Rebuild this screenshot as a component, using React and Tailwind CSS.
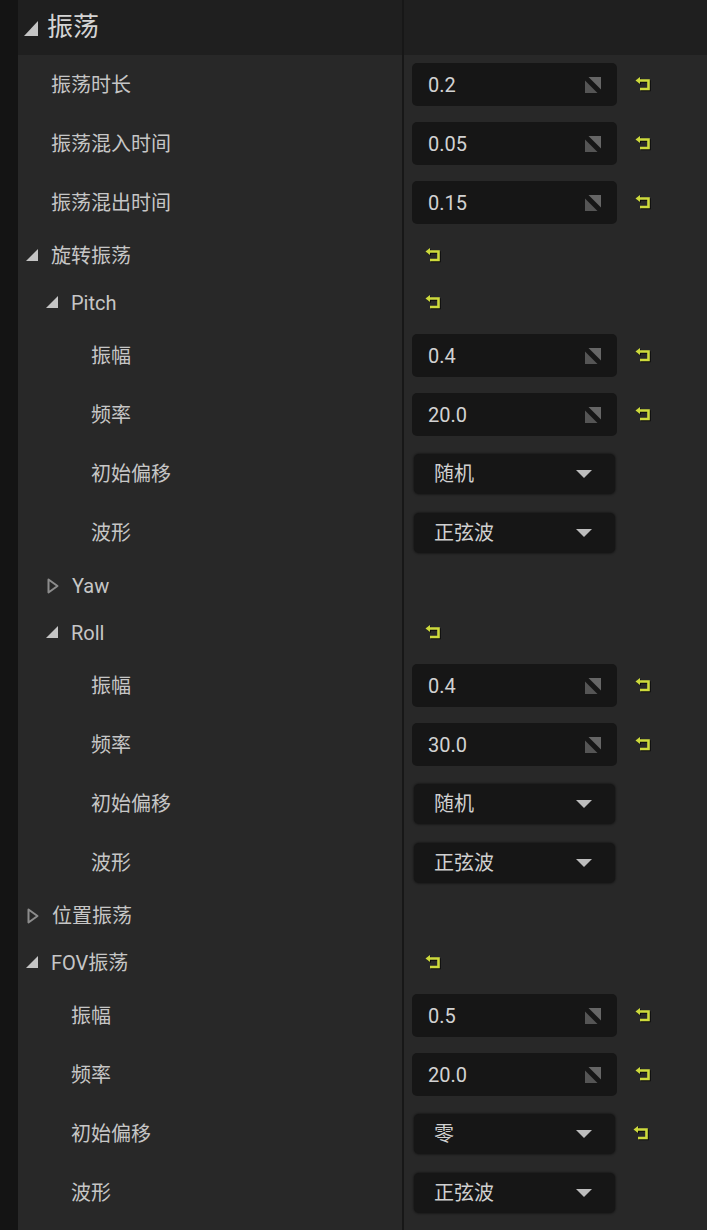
import React from "react";

const FONT = { fontFamily: "Roboto, 'Noto Sans CJK SC', 'Noto Sans', sans-serif" };

function ExpandedArrow({ className = "" }) {
  return (
    <svg width="12" height="12" viewBox="0 0 12 12" className={className}>
      <polygon points="12,0 12,12 0,12" fill="#c4c4c4" />
    </svg>
  );
}

function CollapsedArrow() {
  return (
    <svg width="12" height="16" viewBox="0 0 12 16">
      <polygon points="1.5,1.5 10.5,8 1.5,14.5" fill="none" stroke="#8c8c8c" strokeWidth="2" strokeLinejoin="round" />
    </svg>
  );
}

function ResetIcon() {
  return (
    <svg width="17" height="17" viewBox="0 0 17 17" className="drop-shadow-[1px_1px_0_rgba(0,0,0,0.7)]">
      <polygon points="0.5,4.5 5,1 5,8" fill="#cdda3c" />
      <polyline points="4,4.5 13.5,4.5 13.5,13 5,13" fill="none" stroke="#cdda3c" strokeWidth="2.6" strokeLinejoin="miter" />
    </svg>
  );
}

function SpinIcon() {
  return (
    <svg width="16" height="16" viewBox="0 0 16 16">
      <polygon points="3.5,0 16,0 16,12.5" fill="#666666" />
      <polygon points="0,3.5 0,16 12.5,16" fill="#555555" />
    </svg>
  );
}

function NumberField({ value }) {
  return (
    <div className="flex h-[43px] w-[205px] items-center justify-between rounded-[5px] bg-[#161616] pl-4 pr-[16px]">
      <span className="text-[20px] text-[#d2d2d2]">{value}</span>
      <SpinIcon />
    </div>
  );
}

function ComboField({ value }) {
  return (
    <div className="ml-[2px] flex h-[40px] w-[201px] items-center justify-between rounded-[5px] bg-[#161616] pl-5 pr-[23px] shadow-[0_0_2px_1px_rgba(0,0,0,0.35)]">
      <span className="text-[20px] text-[#d0d0d0]">{value}</span>
      <svg width="16" height="8" viewBox="0 0 16 8">
        <polygon points="0,0 16,0 8,8" fill="#bdbdbd" />
      </svg>
    </div>
  );
}

// one property row: name on the left, value editor on the right
function PropRow({ label, indent, kind, value, reset }) {
  return (
    <div className="flex h-[59px]">
      <div className="flex w-[386px] items-center border-r-2 border-[#171717]" style={{ paddingLeft: indent }}>
        <span className="text-[20px] text-[#c6c6c6]">{label}</span>
      </div>
      <div className="flex flex-1 items-center pl-2">
        {kind === "num" ? <NumberField value={value} /> : <ComboField value={value} />}
        {reset && (
          <div className="ml-[18px] flex items-center">
            <ResetIcon />
          </div>
        )}
      </div>
    </div>
  );
}

// a group heading with its fold arrow
function GroupRow({ label, arrowPad, open, reset }) {
  return (
    <div className="flex h-[47px]">
      <div className="flex w-[386px] items-center border-r-2 border-[#171717]" style={{ paddingLeft: arrowPad }}>
        <div className="flex w-[25px] items-center">
          {open ? <ExpandedArrow className="-mt-[2px]" /> : <CollapsedArrow />}
        </div>
        <span className="text-[20px] text-[#c6c6c6]">{label}</span>
      </div>
      <div className="flex flex-1 items-center pl-[21px]">{reset && <ResetIcon />}</div>
    </div>
  );
}

export default function App() {
  return (
    <div className="flex h-[1230px] w-[707px] overflow-hidden bg-[#141414]" style={FONT}>
      <div className="w-[18px] shrink-0 bg-[#141414]" />
      <div className="flex flex-1 flex-col bg-[#282828]">
        <div className="flex h-[55px] bg-[#1f1f1f]">
          <div className="flex w-[386px] items-center border-r-2 border-[#171717] pl-[6px]">
            <svg width="14" height="15" viewBox="0 0 14 15" className="mt-[2px]">
              <polygon points="14,0 14,15 0,15" fill="#c4c4c4" />
            </svg>
            <span className="ml-[9px] text-[26px] text-[#d4d4d4]">振荡</span>
          </div>
          <div className="flex-1" />
        </div>

        <PropRow label="振荡时长" indent={33} kind="num" value="0.2" reset />
        <PropRow label="振荡混入时间" indent={33} kind="num" value="0.05" reset />
        <PropRow label="振荡混出时间" indent={33} kind="num" value="0.15" reset />

        <GroupRow label="旋转振荡" arrowPad={8} open reset />
        <GroupRow label="Pitch" arrowPad={28} open reset />
        <PropRow label="振幅" indent={73} kind="num" value="0.4" reset />
        <PropRow label="频率" indent={73} kind="num" value="20.0" reset />
        <PropRow label="初始偏移" indent={73} kind="combo" value="随机" />
        <PropRow label="波形" indent={73} kind="combo" value="正弦波" />
        <GroupRow label="Yaw" arrowPad={29} />
        <GroupRow label="Roll" arrowPad={28} open reset />
        <PropRow label="振幅" indent={73} kind="num" value="0.4" reset />
        <PropRow label="频率" indent={73} kind="num" value="30.0" reset />
        <PropRow label="初始偏移" indent={73} kind="combo" value="随机" />
        <PropRow label="波形" indent={73} kind="combo" value="正弦波" />

        <GroupRow label="位置振荡" arrowPad={9} />
        <GroupRow label="FOV振荡" arrowPad={8} open reset />
        <PropRow label="振幅" indent={53} kind="num" value="0.5" reset />
        <PropRow label="频率" indent={53} kind="num" value="20.0" reset />
        <PropRow label="初始偏移" indent={53} kind="combo" value="零" reset />
        <PropRow label="波形" indent={53} kind="combo" value="正弦波" />

        <div className="flex flex-1">
          <div className="w-[386px] border-r-2 border-[#171717]" />
        </div>
      </div>
    </div>
  );
}
